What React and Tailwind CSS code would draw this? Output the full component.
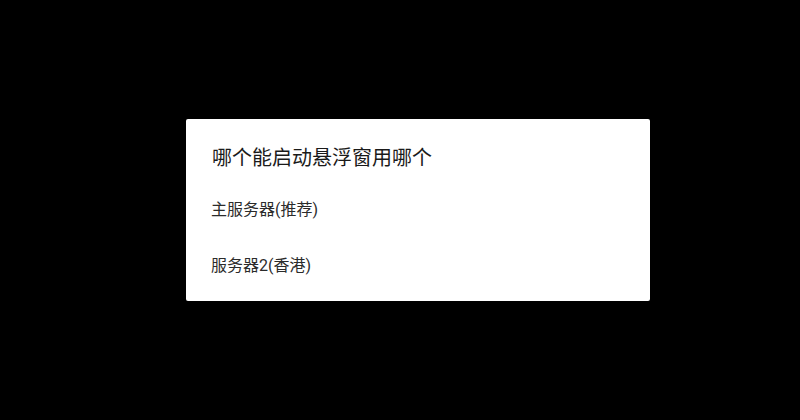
const options = ["主服务器(推荐)", "服务器2(香港)"];

export default function App() {
  return (
    <div
      className="w-[800px] h-[420px] bg-black flex items-center pl-[186px]"
      style={{ fontFamily: 'Roboto, "Noto Sans CJK SC", sans-serif' }}
    >
      <div className="w-[464px] h-[182px] bg-white rounded-[2px] flex flex-col">
        {/* title */}
        <h2 className="pt-[25px] pl-[26px] text-[20px] leading-[28px] text-[#1a1a1a]">
          哪个能启动悬浮窗用哪个
        </h2>
        <div className="mt-[10px] flex flex-col">
          {options.map((opt) => (
            <div
              key={opt}
              className="h-[56px] flex items-center pl-[25px] text-[16px] text-[#2b2b2b]"
            >
              {opt}
            </div>
          ))}
        </div>
      </div>
    </div>
  );
}
